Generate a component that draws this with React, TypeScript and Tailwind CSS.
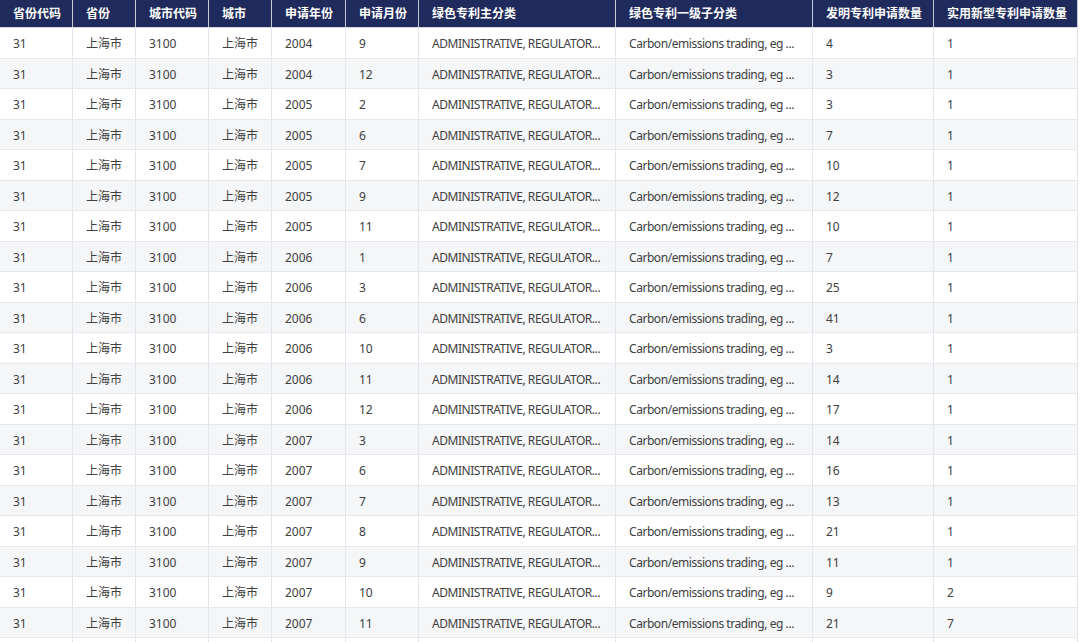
const headers = [
  "省份代码",
  "省份",
  "城市代码",
  "城市",
  "申请年份",
  "申请月份",
  "绿色专利主分类",
  "绿色专利一级子分类",
  "发明专利申请数量",
  "实用新型专利申请数量",
];

// year, month, invention count, utility count
const rows: [number, number, number, number][] = [
  [2004, 9, 4, 1],
  [2004, 12, 3, 1],
  [2005, 2, 3, 1],
  [2005, 6, 7, 1],
  [2005, 7, 10, 1],
  [2005, 9, 12, 1],
  [2005, 11, 10, 1],
  [2006, 1, 7, 1],
  [2006, 3, 25, 1],
  [2006, 6, 41, 1],
  [2006, 10, 3, 1],
  [2006, 11, 14, 1],
  [2006, 12, 17, 1],
  [2007, 3, 14, 1],
  [2007, 6, 16, 1],
  [2007, 7, 13, 1],
  [2007, 8, 21, 1],
  [2007, 9, 11, 1],
  [2007, 10, 9, 2],
  [2007, 11, 21, 7],
  [2007, 12, 18, 3],
];

const cols = "grid grid-cols-[73px_63px_73px_63px_74px_73px_197px_197px_121px_144px]";

export default function App() {
  return (
    <div
      className="w-[1080px] h-[642px] overflow-hidden bg-white text-[12px] text-[#404040]"
      style={{ fontFamily: '"Noto Sans", "Noto Sans CJK SC", sans-serif' }}
    >
      <div className="w-[1078px]">
        {/* Header */}
        <div className={`${cols} h-[28px] bg-[#1f2b5c] border-b border-[#d9dce4]`}>
          {headers.map((h) => (
            <div
              key={h}
              className="flex items-center px-[13px] font-bold text-white whitespace-nowrap border-r border-[#c5c9d6] overflow-hidden"
            >
              {h}
            </div>
          ))}
        </div>

        {/* Body */}
        {rows.map(([year, month, inv, util], i) => (
          <div
            key={i}
            className={`${cols} h-[30.5px] border-b border-[#e6e8ec] ${
              i % 2 === 1 ? "bg-[#f5f6f8]" : "bg-white"
            }`}
          >
            <Cell>31</Cell>
            <Cell>上海市</Cell>
            <Cell>3100</Cell>
            <Cell>上海市</Cell>
            <Cell>{year}</Cell>
            <Cell>{month}</Cell>
            <Cell tight>ADMINISTRATIVE, REGULATOR...</Cell>
            <Cell tight>Carbon/emissions trading, eg ...</Cell>
            <Cell>{inv}</Cell>
            <Cell>{util}</Cell>
          </div>
        ))}
      </div>
    </div>
  );
}

function Cell({ children, tight }: { children: React.ReactNode; tight?: boolean }) {
  return (
    <div
      className={`flex items-center pt-[3px] px-[13px] overflow-hidden whitespace-nowrap border-r border-[#e3e5ea] ${
        tight ? "tracking-[-0.45px]" : ""
      }`}
    >
      {children}
    </div>
  );
}
